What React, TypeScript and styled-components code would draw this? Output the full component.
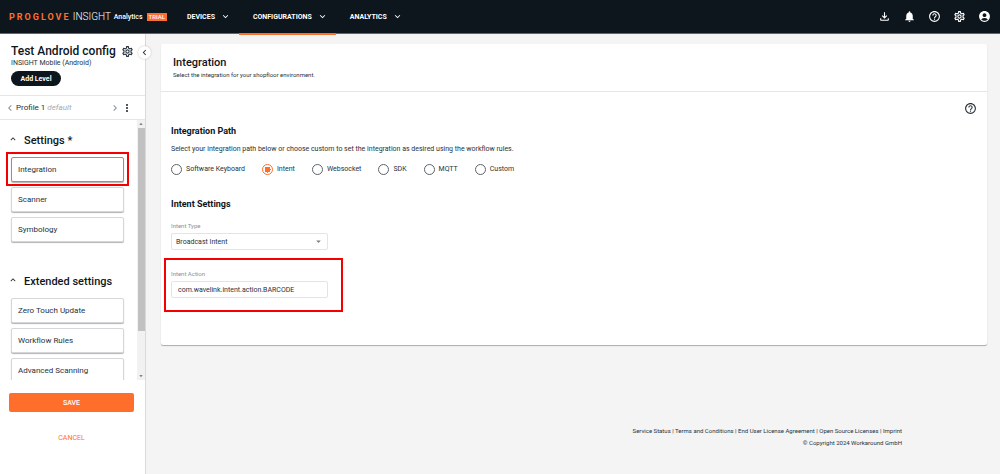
import React, { useState } from "react";
import styled, { createGlobalStyle, css } from "styled-components";
import {
  MdAccountCircle,
  MdArrowDropDown,
  MdArrowDropUp,
  MdChevronLeft,
  MdChevronRight,
  MdExpandLess,
  MdExpandMore,
  MdHelpOutline,
  MdMoreVert,
  MdNotifications,
  MdOutlineFileDownload,
  MdOutlineSettings,
} from "react-icons/md";

const color = {
  ink: "#0e161d",
  orange: "#ff6f2b",
  page: "#f4f4f4",
  line: "#e4e5e5",
  text: "#27323a",
  muted: "#8b9196",
  mark: "#f50000",
};

const GlobalStyle = createGlobalStyle`
  *, *::before, *::after { box-sizing: border-box; }
  body {
    margin: 0;
    background: ${color.page};
    color: ${color.text};
    font-family: Roboto, "Liberation Sans", sans-serif;
    font-size: 7px;
  }
  button, input, select { font: inherit; color: inherit; }
  button { margin: 0; padding: 0; border: 0; background: none; cursor: pointer; }
  h1, h2, h3, p { margin: 0; }
  svg { display: block; flex: none; }
`;

const Shell = styled.div`
  display: flex;
  flex-direction: column;
  height: 100vh;
`;

const TopBar = styled.header`
  display: flex;
  align-items: center;
  flex: none;
  height: 34px;
  padding: 0 9px;
  background: ${color.ink};
  border-bottom: 1px solid #62666b;
  color: #fff;
`;

const Brand = styled.a`
  display: flex;
  align-items: center;
  width: 158px;
  color: #fff;
  text-decoration: none;
`;

const BrandName = styled.span`
  width: 64px;
  color: ${color.orange};
  font-size: 9px;
  font-weight: 700;
  letter-spacing: 2px;
`;

const BrandProduct = styled.span`
  width: 41px;
  font-size: 10px;
  font-weight: 300;
`;

const BrandArea = styled.span`
  width: 33px;
  font-size: 7px;
  font-weight: 500;
`;

const Trial = styled.span`
  padding: 0 2px;
  background: ${color.orange};
  font-size: 6px;
  font-weight: 500;
  line-height: 8px;
`;

const Nav = styled.nav`
  display: flex;
  flex: 1;
  align-self: stretch;
  margin-left: 6px;
`;

const NavItem = styled.button<{ $active?: boolean }>`
  position: relative;
  display: flex;
  align-items: center;
  gap: 5px;
  padding: 0 8px 0 14px;
  font-size: 7px;
  font-weight: 700;

  ${(p) =>
    p.$active &&
    css`
      &::after {
        content: "";
        position: absolute;
        left: 0;
        right: 0;
        bottom: -2px;
        height: 2px;
        background: ${color.orange};
      }
    `}
`;

const Tools = styled.div`
  display: flex;
  gap: 12px;
`;

const IconButton = styled.button`
  display: flex;
`;

const Body = styled.div`
  display: flex;
  flex: 1;
  min-height: 0;
`;

const Sidebar = styled.aside`
  position: relative;
  display: flex;
  flex-direction: column;
  flex: none;
  width: 146px;
  background: #fff;
  border-right: 1px solid #d9dadb;
`;

const Collapse = styled.button`
  position: absolute;
  top: 12px;
  right: -6px;
  display: grid;
  place-items: center;
  width: 13px;
  height: 13px;
  border-radius: 50%;
  background: #fff;
  box-shadow: 0 0 2px rgba(0, 0, 0, 0.25);
`;

const ConfigHead = styled.div`
  flex: none;
  height: 62px;
  padding: 10px 11px 0;
  border-bottom: 1px solid ${color.line};
`;

const ConfigTitle = styled.div`
  display: flex;
  align-items: center;
  justify-content: space-between;

  h1 {
    font-size: 12px;
    font-weight: 500;
    line-height: 15px;
    color: ${color.ink};
    white-space: nowrap;
  }
`;

const ConfigKind = styled.p`
  font-size: 7px;
  line-height: 8px;
`;

const AddLevel = styled.button`
  width: 50px;
  height: 15px;
  margin-top: 4px;
  border-radius: 8px;
  background: ${color.ink};
  color: #fff;
  font-size: 7px;
  font-weight: 700;
`;

const ProfileBar = styled.div`
  display: flex;
  align-items: center;
  flex: none;
  height: 24px;
  padding: 0 12px 0 4px;
  border-bottom: 1px solid ${color.line};
  font-size: 8px;
  color: ${color.text};

  em { color: #a6abaf; }
`;

const ProfileName = styled.span`
  flex: 1;
`;

const ScrollRegion = styled.div`
  display: flex;
  flex: 1;
  min-height: 0;
`;

const ScrollContent = styled.div`
  flex: 1;
  overflow: hidden;
  padding: 14px 13px 0 11px;
`;

const ScrollTrack = styled.div`
  display: flex;
  flex-direction: column;
  align-items: center;
  width: 8px;
  background: #f1f1f1;
  color: #606060;
`;

const ScrollThumb = styled.div`
  width: 7px;
  height: 78%;
  background: #c1c1c1;
`;

const TrackSpace = styled.div`
  flex: 1;
`;

const Group = styled.section`
  margin-bottom: 33px;
`;

const GroupHead = styled.button`
  display: flex;
  align-items: flex-start;
  gap: 6px;
  margin-left: -3px;

  h2 {
    font-size: 11px;
    font-weight: 500;
    line-height: 14px;
    color: ${color.ink};
  }
`;

const GroupItems = styled.div`
  display: flex;
  flex-direction: column;
  gap: 5px;
  margin-top: 9px;
`;

const ItemWrap = styled.div`
  position: relative;
`;

const Item = styled.button<{ $active?: boolean }>`
  display: block;
  width: 100%;
  height: 25px;
  padding: 0 6px 1px;
  border: 1px solid ${(p) => (p.$active ? color.orange : "#d5d7d8")};
  border-radius: 2px;
  background: #fff;
  box-shadow: 0 1px 1px rgba(0, 0, 0, 0.3);
  font-size: 8px;
  text-align: left;
`;

const Mark = styled.div<{ $inset: string }>`
  position: absolute;
  inset: ${(p) => p.$inset};
  border: 2px solid ${color.mark};
  pointer-events: none;
`;

const Actions = styled.div`
  display: flex;
  flex-direction: column;
  gap: 16px;
  flex: none;
  height: 94px;
  padding: 13px 11px 0 9px;
`;

const ActionButton = styled.button<{ $primary?: boolean }>`
  height: 19px;
  border-radius: 2px;
  background: ${(p) => (p.$primary ? color.orange : "transparent")};
  color: ${(p) => (p.$primary ? "#fff" : color.orange)};
  font-size: 7px;
  font-weight: ${(p) => (p.$primary ? 500 : 400)};
`;

const Main = styled.main`
  display: flex;
  flex-direction: column;
  justify-content: space-between;
  flex: 1;
  min-width: 0;
  padding: 10px 13px 25px 15px;
`;

const Card = styled.section`
  background: #fff;
  border-radius: 2px;
  box-shadow: 0 1px 1px rgba(0, 0, 0, 0.3);
`;

const CardHead = styled.div`
  height: 48px;
  padding: 12px 12px 0;
  border-bottom: 1px solid ${color.line};

  h2 {
    font-size: 11px;
    font-weight: 500;
    line-height: 14px;
    color: ${color.ink};
  }

  p {
    margin-top: 1px;
    font-size: 6px;
    line-height: 8px;
  }
`;

const CardBody = styled.div`
  padding: 10px 10px 47px;
`;

const HelpRow = styled.div`
  display: flex;
  justify-content: flex-end;
  margin-bottom: 10px;
`;

const Heading = styled.h3`
  font-size: 9px;
  font-weight: 700;
  line-height: 12px;
  color: ${color.ink};
`;

const Hint = styled.p`
  margin-top: 6px;
  font-size: 7px;
  line-height: 12px;
`;

const Radios = styled.div`
  display: flex;
  gap: 17px;
  margin: 8px 0 23px;
`;

const RadioLabel = styled.label`
  display: flex;
  align-items: center;
  gap: 4px;
  font-size: 7px;
  line-height: 12px;
`;

const Radio = styled.input`
  appearance: none;
  width: 11px;
  height: 11px;
  margin: 0;
  border: 1px solid #5d6468;
  border-radius: 50%;

  &:checked {
    border-color: ${color.orange};
    background: radial-gradient(circle, ${color.orange} 0 3px, transparent 3px);
  }
`;

const Field = styled.div`
  position: relative;
  width: 157px;
  margin-top: 11px;

  & + & { margin-top: 19px; }

  label {
    display: block;
    margin-bottom: 2px;
    color: ${color.muted};
    font-size: 6px;
    line-height: 10px;
  }
`;

const Control = css`
  display: block;
  width: 100%;
  height: 17px;
  border: 1px solid #e3e4e5;
  border-radius: 2px;
  background: #fff;
  font-size: 7px;
`;

const SelectBox = styled.div`
  display: grid;
  align-items: center;

  select, svg { grid-area: 1 / 1; }
  svg { justify-self: end; margin-right: 4px; color: #7a8085; pointer-events: none; }
`;

const Select = styled.select`
  ${Control}
  appearance: none;
  padding: 0 4px;
`;

const TextInput = styled.input`
  ${Control}
  padding: 0 6px;
`;

const Footer = styled.footer`
  padding-right: 85px;
  font-size: 6px;
  line-height: 12px;
  text-align: right;

  a { color: inherit; text-decoration: none; }
`;

const navItems = ["DEVICES", "CONFIGURATIONS", "ANALYTICS"];
const tools = [
  { label: "Downloads", Icon: MdOutlineFileDownload },
  { label: "Notifications", Icon: MdNotifications },
  { label: "Help", Icon: MdHelpOutline },
  { label: "Settings", Icon: MdOutlineSettings },
  { label: "Account", Icon: MdAccountCircle },
];
const groups = [
  { title: "Settings *", items: ["Integration", "Scanner", "Symbology"] },
  {
    title: "Extended settings",
    items: ["Zero Touch Update", "Workflow Rules", "Advanced Scanning"],
  },
];
const paths = ["Software Keyboard", "Intent", "Websocket", "SDK", "MQTT", "Custom"];
const links = [
  "Service Status",
  "Terms and Conditions",
  "End User License Agreement",
  "Open Source Licenses",
  "Imprint",
];

export default function App() {
  const [path, setPath] = useState("Intent");
  const [action, setAction] = useState("com.wavelink.intent.action.BARCODE");

  return (
    <Shell>
      <GlobalStyle />
      <TopBar>
        <Brand href="#">
          <BrandName>PROGLOVE</BrandName>
          <BrandProduct>INSIGHT</BrandProduct>
          <BrandArea>Analytics</BrandArea>
          <Trial>TRIAL</Trial>
        </Brand>
        <Nav>
          {navItems.map((name) => (
            <NavItem key={name} $active={name === "CONFIGURATIONS"}>
              {name}
              <MdExpandMore size={11} />
            </NavItem>
          ))}
        </Nav>
        <Tools>
          {tools.map(({ label, Icon }) => (
            <IconButton key={label} aria-label={label}>
              <Icon size={13} />
            </IconButton>
          ))}
        </Tools>
      </TopBar>

      <Body>
        <Sidebar>
          <ConfigHead>
            <ConfigTitle>
              <h1>Test Android config</h1>
              <IconButton aria-label="Configuration settings">
                <MdOutlineSettings size={13} />
              </IconButton>
            </ConfigTitle>
            <ConfigKind>INSIGHT Mobile (Android)</ConfigKind>
            <AddLevel>Add Level</AddLevel>
          </ConfigHead>
          <ProfileBar>
            <IconButton aria-label="Previous profile">
              <MdChevronLeft size={12} color="#8b9196" />
            </IconButton>
            <ProfileName>
              Profile 1 <em>default</em>
            </ProfileName>
            <IconButton aria-label="Next profile">
              <MdChevronRight size={12} color="#8b9196" />
            </IconButton>
            <IconButton aria-label="Profile menu">
              <MdMoreVert size={12} />
            </IconButton>
          </ProfileBar>
          <ScrollRegion>
            <ScrollContent>
              {groups.map((group) => (
                <Group key={group.title}>
                  <GroupHead>
                    <MdExpandLess size={10} />
                    <h2>{group.title}</h2>
                  </GroupHead>
                  <GroupItems>
                    {group.items.map((item) => (
                      <ItemWrap key={item}>
                        <Item $active={item === "Integration"}>{item}</Item>
                        {item === "Integration" && <Mark $inset="-5px -5px -4px" />}
                      </ItemWrap>
                    ))}
                  </GroupItems>
                </Group>
              ))}
            </ScrollContent>
            <ScrollTrack aria-hidden="true">
              <MdArrowDropUp size={8} />
              <ScrollThumb />
              <TrackSpace />
              <MdArrowDropDown size={8} />
            </ScrollTrack>
          </ScrollRegion>
          <Actions>
            <ActionButton $primary>SAVE</ActionButton>
            <ActionButton>CANCEL</ActionButton>
          </Actions>
          <Collapse aria-label="Collapse sidebar">
            <MdChevronLeft size={11} />
          </Collapse>
        </Sidebar>

        <Main>
          <Card>
            <CardHead>
              <h2>Integration</h2>
              <p>Select the integration for your shopfloor environment.</p>
            </CardHead>
            <CardBody>
              <HelpRow>
                <IconButton aria-label="Integration help">
                  <MdHelpOutline size={13} />
                </IconButton>
              </HelpRow>
              <Heading>Integration Path</Heading>
              <Hint>
                Select your integration path below or choose custom to set the
                integration as desired using the workflow rules.
              </Hint>
              <Radios role="radiogroup" aria-label="Integration Path">
                {paths.map((name) => (
                  <RadioLabel key={name}>
                    <Radio
                      type="radio"
                      name="path"
                      checked={path === name}
                      onChange={() => setPath(name)}
                    />
                    {name}
                  </RadioLabel>
                ))}
              </Radios>
              <Heading>Intent Settings</Heading>
              <Field>
                <label htmlFor="intent-type">Intent Type</label>
                <SelectBox>
                  <Select id="intent-type">
                    <option>Broadcast Intent</option>
                  </Select>
                  <MdArrowDropDown size={11} />
                </SelectBox>
              </Field>
              <Field>
                <label htmlFor="intent-action">Intent Action</label>
                <TextInput
                  id="intent-action"
                  value={action}
                  onChange={(e) => setAction(e.target.value)}
                />
                <Mark $inset="-11px -15px -14px -7px" />
              </Field>
            </CardBody>
          </Card>
          <Footer>
            <div>
              {links.map((link, i) => (
                <React.Fragment key={link}>
                  {i > 0 && " | "}
                  <a href="#">{link}</a>
                </React.Fragment>
              ))}
            </div>
            <div>© Copyright 2024 Workaround GmbH</div>
          </Footer>
        </Main>
      </Body>
    </Shell>
  );
}
